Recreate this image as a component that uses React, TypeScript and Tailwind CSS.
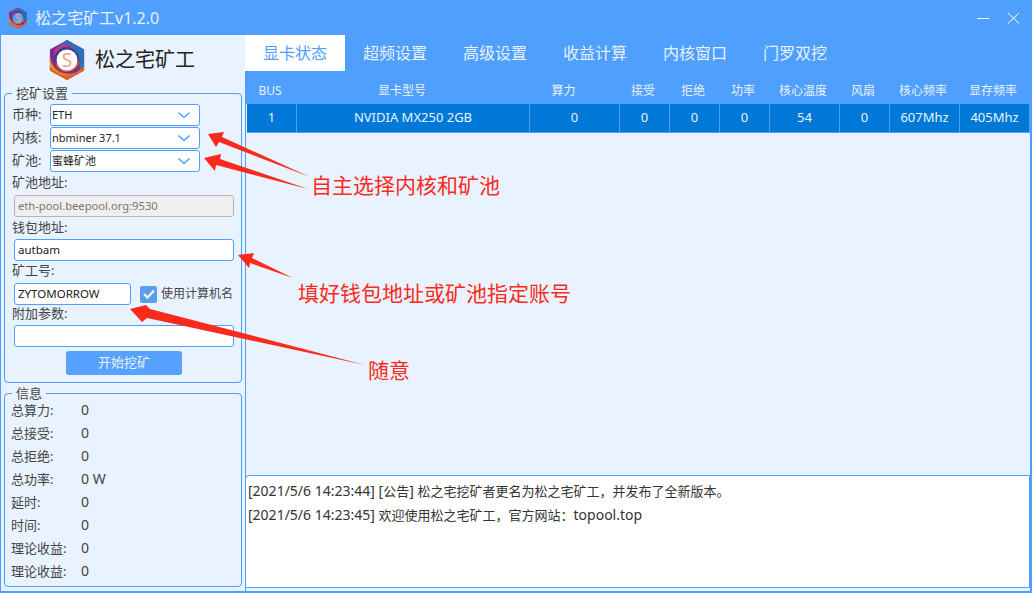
import { ReactNode } from "react";

const FONT = "font-['Noto_Sans','Noto_Sans_CJK_SC',sans-serif]";

const TABS = ["显卡状态", "超频设置", "高级设置", "收益计算", "内核窗口", "门罗双挖"];

const COLUMNS = [
  { title: "BUS", value: "1" },
  { title: "显卡型号", value: "NVIDIA MX250 2GB" },
  { title: "算力", value: "0" },
  { title: "接受", value: "0" },
  { title: "拒绝", value: "0" },
  { title: "功率", value: "0" },
  { title: "核心温度", value: "54" },
  { title: "风扇", value: "0" },
  { title: "核心频率", value: "607Mhz" },
  { title: "显存频率", value: "405Mhz" },
];

const INFO = [
  ["总算力:", "0"],
  ["总接受:", "0"],
  ["总拒绝:", "0"],
  ["总功率:", "0 W"],
  ["延时:", "0"],
  ["时间:", "0"],
  ["理论收益:", "0"],
  ["理论收益:", "0"],
];

function Logo({ className, inner, id }: { className: string; inner: string; id: string }) {
  return (
    <svg viewBox="0 0 40 44" className={className}>
      <defs>
        <linearGradient id={id} x1="0" y1="0" x2="0" y2="1">
          <stop offset="0" stopColor="#f2a05a" />
          <stop offset="1" stopColor="#f49ab8" />
        </linearGradient>
      </defs>
      <path d="M20 1 L38 11 L38 33 L20 43 L2 33 L2 11 Z" fill="#7b2c8f" />
      <path d="M20 1 L38 11 L38 31 L31 36 C36 26 33 13 22 8 C17 6 12 6 9 8 Z" fill="#2f6fb8" />
      <path d="M2 14 C2 28 12 38 26 36 C30 35 34 33 38 28 L38 33 L20 43 L2 33 Z" fill="#e8601f" />
      <path d="M2 22 C4 32 14 40 27 37 C17 41 6 34 2 28 Z" fill="#f59a3a" />
      <path d="M7 11 C12 5 22 4 28 9 C20 6 11 8 7 18 Z" fill="#b23a8f" />
      <circle cx="20" cy="22" r="13" fill="#3d3a92" />
      <path d="M7.5 24 C9 34 22 39 31 29 C33 26 33 24 33 22 C30 30 14 32 7.5 24 Z" fill="#d9662f" />
      <circle cx="20" cy="22" r="11" fill={inner} />
      <text x="20" y="29" textAnchor="middle" fontSize="20" fill={`url(#${id})`} fontFamily="Noto Sans, sans-serif">
        S
      </text>
    </svg>
  );
}

function Chevron() {
  return (
    <svg viewBox="0 0 12 6" className="w-3 h-[6px] text-[#4f9fff]" fill="none" stroke="currentColor" strokeWidth="1.4">
      <path d="M0.5 0.5 L6 5.5 L11.5 0.5" />
    </svg>
  );
}

function SelectRow({ label, value }: { label: string; value: string }) {
  return (
    <div className="flex items-center h-[22px] mb-px">
      <span className="w-[38px] text-[13px] text-[#444]">{label}</span>
      <div className="w-[150px] h-[22px] bg-white border border-[#4f9fff] rounded-[3px] flex items-center justify-between pl-[1px] pr-[9px] text-[11px] text-[#222]">
        <span>{value}</span>
        <Chevron />
      </div>
    </div>
  );
}

function Label({ children, className = "" }: { children: ReactNode; className?: string }) {
  return <div className={`text-[13px] leading-[18px] text-[#444] ${className}`}>{children}</div>;
}

function TextBox({ children, className = "" }: { children?: ReactNode; className?: string }) {
  return (
    <div className={`h-[22px] border border-[#4f9fff] bg-white rounded-[3px] pl-[3px] flex items-center text-[11.5px] text-[#222] ${className}`}>
      {children}
    </div>
  );
}

function Annotations() {
  return (
    <>
      <svg className="absolute inset-0 pointer-events-none" width="1032" height="593" fill="#fb2a1c">
        <polygon points="208,134 224,132 222,137 310,177 219,142 216,147" />
        <polygon points="204,158 221,154 220,159 308,189 216,165 215,171" />
        <polygon points="238,255 254,253 252,258 293,278 250,263 249,268" />
        <polygon points="130,309 146,305 150,309 365,365 147,318 142,322" />
      </svg>
      <div className="absolute left-[311px] top-[171px] text-[21px] leading-[28px] text-[#fb2a1c]">自主选择内核和矿池</div>
      <div className="absolute left-[298px] top-[279px] text-[21px] leading-[28px] text-[#fb2a1c]">填好钱包地址或矿池指定账号</div>
      <div className="absolute left-[368px] top-[356px] text-[21px] leading-[28px] text-[#fb2a1c]">随意</div>
    </>
  );
}

export default function App() {
  return (
    <div className={`relative w-[1032px] h-[593px] overflow-hidden bg-[#4f9fff] flex flex-col ${FONT}`}>
      {/* Title bar */}
      <header className="h-[35px] shrink-0 flex items-center pl-2 pr-[13px]">
        <Logo className="w-[20px] h-[22px]" inner="#5b9fe8" id="logo-small" />
        <span className="ml-[7px] text-[16px] text-[#e8f1ff]">松之宅矿工v1.2.0</span>
        <svg viewBox="0 0 42 12" className="ml-auto w-[42px] h-3" fill="none" stroke="white" strokeWidth="1">
          <path d="M0 6.5 H12" />
          <path d="M31 1 L42 11.5 M42 1 L31 11.5" />
        </svg>
      </header>

      <div className="flex-1 flex min-h-0 pb-[2px]">
        {/* Sidebar */}
        <aside className="ml-px w-[244px] shrink-0 bg-[#e9f2ff] flex flex-col pl-[3px] pr-[3px]">
          <div className="h-[49px] shrink-0 flex items-center justify-center pr-[3px] pt-[1px]">
            <Logo className="w-[38px] h-[42px]" inner="#ffffff" id="logo-large" />
            <span className="ml-[9px] text-[20px] text-[#222]">松之宅矿工</span>
          </div>

          <fieldset className="h-[299px] shrink-0 border border-[#4f9fff] rounded-[4px] px-[7px]">
            <legend className="px-[4px] text-[13px] leading-[18px] text-[#444]">挖矿设置</legend>
            <div className="mt-[2px]">
              <SelectRow label="币种:" value="ETH" />
              <SelectRow label="内核:" value="nbminer 37.1" />
              <SelectRow label="矿池:" value="蜜蜂矿池" />
              <Label className="mt-[1px]">矿池地址:</Label>
              <TextBox className="mt-[4px] ml-[2px] w-[220px] !bg-[#efefef] !border-[#b5b5b5] !text-[#777] !text-[11.2px]">
                eth-pool.beepool.org:9530
              </TextBox>
              <Label className="mt-[1px]">钱包地址:</Label>
              <TextBox className="mt-[3px] ml-[2px] w-[220px]">autbam</TextBox>
              <Label>矿工号:</Label>
              <div className="mt-[4px] ml-[2px] flex items-center">
                <TextBox className="w-[117px]">ZYTOMORROW</TextBox>
                <span className="ml-[9px] w-[17px] h-[17px] rounded-[2px] bg-[#5b9fe8] flex items-center justify-center">
                  <svg viewBox="0 0 12 10" className="w-3 h-[10px]" fill="none" stroke="white" strokeWidth="2">
                    <path d="M1 5 L4.5 8.5 L11 1.5" />
                  </svg>
                </span>
                <span className="ml-1 text-[12px] text-[#444] whitespace-nowrap">使用计算机名</span>
              </div>
              <Label className="-mt-px">附加参数:</Label>
              <TextBox className="mt-[3px] ml-[2px] w-[220px]" />
              <button className="block mt-[4px] ml-[54px] w-[116px] h-[24px] rounded-[3px] bg-[#55a2ff] text-[13px] text-[#e8f1ff]">
                开始挖矿
              </button>
            </div>
          </fieldset>

          <fieldset className="mt-px h-[203px] shrink-0 border border-[#4f9fff] rounded-[4px] pl-[6px]">
            <legend className="ml-px px-[4px] text-[13px] leading-[18px] text-[#444]">信息</legend>
            <div className="-mt-px">
              {INFO.map(([label, value], i) => (
                <div key={i} className="flex h-[23px] leading-[18px] text-[#444]">
                  <span className="w-[70px] text-[13px]">{label}</span>
                  <span className="text-[14px]">{value}</span>
                </div>
              ))}
            </div>
          </fieldset>
        </aside>

        {/* Main */}
        <main className="flex-1 min-w-0 flex flex-col">
          <nav className="h-[36px] shrink-0 flex">
            {TABS.map((tab, i) => (
              <div
                key={tab}
                className={`w-[100px] flex items-center justify-center text-[16px] ${
                  i === 0 ? "bg-white text-[#4f9fff]" : "text-[#e8f1ff]"
                }`}
              >
                {tab}
              </div>
            ))}
          </nav>

          <div className="grid grid-cols-[50px_214px_109px_50px_50px_50px_70px_50px_70px_70px] h-[33px] pt-[6px] shrink-0 items-center text-[12px] text-[#e8f1ff]">
            {COLUMNS.map(c => (
              <div key={c.title} className="text-center">
                {c.title}
              </div>
            ))}
          </div>

          <div className="mr-[2px] flex-1 min-h-0 bg-[#e9f2ff] border-l border-[#4f9fff] flex flex-col">
            <div className="flex-1 min-h-0 pl-px">
              <div className="grid grid-cols-[50px_233px_90px_50px_50px_50px_70px_50px_70px_70px] h-[29px] bg-[#0078d7] border-b border-[#4f9fff] text-[13px] text-[#e8f4ff]">
                {COLUMNS.map(c => (
                  <div key={c.title} className="flex items-center justify-center border-r border-[#4f9fff]">
                    {c.value}
                  </div>
                ))}
              </div>
            </div>
            <div className="h-[113px] shrink-0 mb-[3px] -ml-px bg-white border border-[#4f9fff] rounded-tl-[4px] pl-[2px] pt-[3px] text-[13px] leading-[24px] text-[#333]">
              <div>
                <span className="text-[14px]">[2021/5/6 14:23:44] [</span>公告<span className="text-[14px]">] </span>
                松之宅挖矿者更名为松之宅矿工，并发布了全新版本。
              </div>
              <div>
                <span className="text-[14px]">[2021/5/6 14:23:45] </span>
                欢迎使用松之宅矿工，官方网站：<span className="text-[14px]">topool.top</span>
              </div>
            </div>
          </div>
        </main>
      </div>

      <Annotations />
    </div>
  );
}
